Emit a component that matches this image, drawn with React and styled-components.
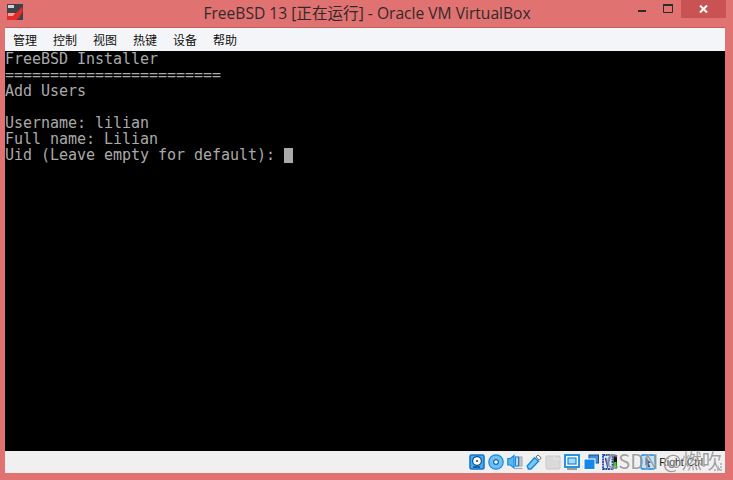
import React from "react";
import styled, { createGlobalStyle } from "styled-components";

const Global = createGlobalStyle`
  html, body { margin: 0; padding: 0; width: 733px; height: 480px; overflow: hidden; background: #e07272; }
`;

const Window = styled.div`
  position: relative;
  width: 733px;
  height: 480px;
  box-sizing: border-box;
  background: #e07272;
  display: flex;
  flex-direction: column;
`;

const TitleBar = styled.div`
  height: 27px;
  display: flex;
  align-items: flex-start;
  padding: 0 7px 0 7px;
  flex: none;
`;

const AppIcon = styled.svg`
  width: 16px;
  height: 16px;
  margin-top: 4px;
  flex: none;
`;

const Title = styled.div`
  flex: 1;
  text-align: center;
  padding: 3px 0 0 0;
  margin-left: 74px;
  font: 15.6px/20px "Open Sans", "Noto Sans CJK SC", sans-serif;
  color: #33292a;
  white-space: nowrap;
`;

const Controls = styled.div`
  display: flex;
  align-items: flex-start;
  flex: none;
`;

const Ctl = styled.svg`
  display: block;
  width: 10px;
  height: 10px;
  margin: 3px 0 0 ${(p) => p.$gap}px;
`;

const Close = styled.div`
  width: 45px;
  height: 18px;
  margin-left: 8px;
  background: #c95353;
  display: flex;
  align-items: center;
  justify-content: center;
`;

const Body = styled.div`
  margin: 0 8px 7px 5px;
  display: flex;
  flex-direction: column;
  border-top: 1px solid #c46060;
  flex: none;
`;

const MenuBar = styled.div`
  height: 23px;
  background: #f4f5f8;
  display: flex;
  align-items: center;
  gap: 16px;
  padding: 0 8px;
`;

const MenuItem = styled.span`
  font: 12px/23px "Noto Sans CJK SC", sans-serif;
  color: #111;
`;

const Screen = styled.pre`
  margin: 0;
  height: 400px;
  box-sizing: border-box;
  background: #000;
  color: #aaaaaa;
  font: 15px/16px "DejaVu Sans Mono", "Liberation Mono", monospace;
  letter-spacing: -0.03px;
  padding: 0;
  overflow: hidden;
`;

const Cursor = styled.span`
  display: inline-block;
  width: 9px;
  height: 15px;
  background: #aaaaaa;
  vertical-align: -3px;
`;

const StatusBar = styled.div`
  height: 22px;
  background: #f0f0f0;
  display: flex;
  align-items: center;
  justify-content: flex-end;
  padding: 0 22px 0 0;
  gap: 3px;
`;

const Hint = styled.span`
  font: 10.5px/14px "Liberation Sans", sans-serif;
  color: #111;
  margin-left: 0;
`;

const StatusIcon = styled.svg`
  width: 16px;
  height: 16px;
  display: block;
  flex: none;
`;

const Watermark = styled.div`
  position: absolute;
  left: 606px;
  top: 449px;
  font: 20px/24px "Noto Sans CJK SC", sans-serif;
  color: rgba(125, 125, 125, 0.72);
  text-shadow: 0 0 2px rgba(255, 255, 255, 0.8);
  white-space: nowrap;
`;

const Grip = styled.svg`
  position: absolute;
  left: 712px;
  top: 462px;
  width: 11px;
  height: 11px;
`;

const B = "#1488e0";
const L = "#a9dafa";

const icons = [
  <>
    <rect x="1" y="1" width="14" height="14" rx="1.5" fill="#4aa8ec" stroke="#0f78cf" strokeWidth="1.6" />
    <circle cx="8" cy="7" r="4.4" fill="#fff" stroke="#14507f" strokeWidth="1.2" />
    <circle cx="8" cy="7" r="1.1" fill="#14507f" />
    <path d="M4 13h7" stroke="#14507f" strokeWidth="1.6" />
  </>,
  <>
    <circle cx="8" cy="8" r="7.2" fill="#6fc0f5" stroke={B} strokeWidth="1.2" />
    <circle cx="8" cy="8" r="2.4" fill="#fff" stroke="#0f6db8" strokeWidth="1.2" />
  </>,
  <>
    <path d="M.8 4.5h2.7L7 1.5v12.5L3.5 11H.8z" fill="#5eb5f0" stroke={B} strokeWidth="1.2" />
    <rect x="8.5" y="3" width="3" height="9" fill="#c4e6fb" stroke={B} strokeWidth="1.2" />
    <rect x="12.5" y="3" width="2.5" height="9" fill="#c9c9c9" stroke="#999" strokeWidth="0.8" />
    <path d="M8 14.5h7.5" stroke="#aaa" strokeWidth="1.2" />
  </>,
  <>
    <path d="M1.2 12 8.5 3.8l4 3.4L5 15H2.4z" fill="#7cc8f7" stroke={B} strokeWidth="1.4" />
    <path d="M10 2.8 12.2 1l3 3-2 2.2z" fill="#fff" stroke="#666" />
  </>,
  <>
    <rect x="1" y="2" width="14" height="13" rx="1" fill="#dadada" stroke="#c8c8c8" />
    <path d="M9 2v3h6" fill="none" stroke="#e9e9e9" />
  </>,
  <>
    <rect x="1" y="1" width="14" height="12" fill="#fff" stroke={B} strokeWidth="1.8" />
    <rect x="4" y="4" width="8" height="6" fill="#a9dafa" stroke={B} strokeWidth="1.2" />
    <path d="M3 15h10" stroke="#666" strokeWidth="1.2" />
  </>,
  <>
    <rect x="6" y="1" width="9.5" height="8" fill="#3f8fd8" stroke="#174f8c" />
    <rect x="1" y="5" width="11" height="10.5" fill="#1488e8" stroke="#fff" />
  </>,
  <>
    <rect x="1" y="1" width="9.5" height="14" fill="#dfe6f5" stroke="#2546ac" strokeWidth="1.8" strokeDasharray="2 0.6" />
    <path d="M3.5 4 5.5 12 8 3" fill="none" stroke="#1a3a9a" strokeWidth="1.5" />
    <rect x="11.5" y="1" width="3.5" height="14" fill="#111" />
    <rect x="12" y="8" width="2.5" height="7" fill="#38d020" />
  </>,
  null,
];

const Mouse = () => (
  <StatusIcon viewBox="0 0 16 16">
    <rect x="1" y="1" width="14" height="14" rx="2" fill="#bfe2fa" stroke={B} strokeWidth="1.6" />
    <path d="M5.5 3 11 9H8.6l1.6 4-2 .6L7 10l-1.5 1.4z" fill="#173a72" />
  </StatusIcon>
);

const menus = ["管理", "控制", "视图", "热键", "设备", "帮助"];

export default function App() {
  return (
    <Window>
      <Global />
      <TitleBar>
        <AppIcon viewBox="0 0 16 16">
          <rect width="16" height="16" fill="#3c4248" />
          <rect x="1" y="1" width="6" height="3" fill="#cfd3d6" />
          <path d="M0 9h9l6-6 1 4-4 7-3 2H0z" fill="#e22c2c" />
          <path d="M1 9h7l-2 3H1z" fill="#ff9a9a" />
        </AppIcon>
        <Title>FreeBSD 13 [正在运行] - Oracle VM VirtualBox</Title>
        <Controls>
          <Ctl $gap={0} viewBox="0 0 10 10">
            <rect x="1" y="7" width="8" height="2" fill="#2b2b2b" />
          </Ctl>
          <Ctl $gap={16} viewBox="0 0 10 10">
            <path d="M.5 1.5h9v8h-9z" fill="none" stroke="#2b2b2b" />
            <rect y="1" width="10" height="2" fill="#2b2b2b" />
          </Ctl>
          <Close>
            <svg width="9" height="8" viewBox="0 0 9 8">
              <path d="M1 .5 8 7.5M8 .5 1 7.5" stroke="#fff" strokeWidth="2" />
            </svg>
          </Close>
        </Controls>
      </TitleBar>
      <Body>
        <MenuBar>
          {menus.map((m) => (
            <MenuItem key={m}>{m}</MenuItem>
          ))}
        </MenuBar>
        <Screen>
          {`FreeBSD Installer
========================
Add Users

Username: lilian
Full name: Lilian
Uid (Leave empty for default): `}
          <Cursor />
        </Screen>
        <StatusBar>
          {icons.map((ic, i) => (
            <StatusIcon key={i} viewBox="0 0 16 16">
              {ic}
            </StatusIcon>
          ))}
          <Mouse />
          <Hint>Right Ctrl</Hint>
        </StatusBar>
      </Body>
      <Watermark>CSDN @燃吹</Watermark>
      <Grip viewBox="0 0 11 11">
        <path d="M8 1h2v2H8zM5 4h2v2H5zM8 4h2v2H8zM2 7h2v2H2zM5 7h2v2H5zM8 7h2v2H8z" fill="#bdbdbd" />
      </Grip>
    </Window>
  );
}
